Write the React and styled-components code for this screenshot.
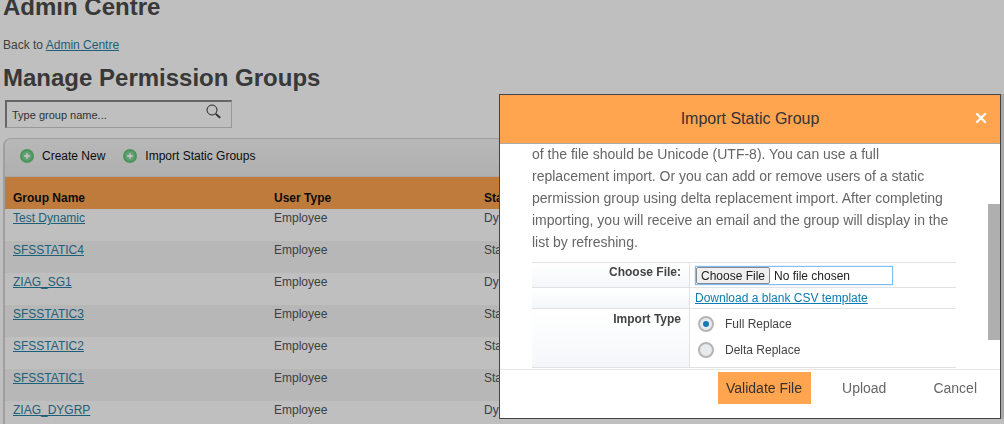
import React from "react";
import styled, { createGlobalStyle } from "styled-components";
import { X } from "lucide-react";

const GlobalStyle = createGlobalStyle`
  html, body {
    margin: 0;
    height: 100%;
    overflow: hidden;
    background: #fff;
    font-family: "Liberation Sans", Arial, sans-serif;
    color: #555;
  }
`;

const Page = styled.div`
  padding: 0 3px;
  width: 998px;
  height: 424px;
  overflow: hidden;
  box-sizing: border-box;
`;

const Title = styled.h1`
  margin: -5px 0 0;
  font-size: 24px;
  line-height: 24px;
  font-weight: 700;
  color: #4b4b4b;
`;

const BackLine = styled.div`
  margin-top: 18px;
  font-size: 12px;
  line-height: 16px;
`;

const TextLink = styled.a`
  color: #0b7ab3;
  text-decoration: underline;
`;

const PageLink = styled(TextLink)`
  color: #2a7fa5;
`;

const Heading = styled.h2`
  margin: 11px 0 0;
  font-size: 24px;
  line-height: 28px;
  font-weight: 700;
  color: #4b4b4b;
`;

const SearchBox = styled.div`
  margin: 8px 0 0 2px;
  width: 227px;
  height: 28px;
  box-sizing: border-box;
  display: flex;
  align-items: center;
  justify-content: space-between;
  padding: 0 10px 0 5px;
  border: 1px solid #ccc;
  border-top: 2px solid #888;
  border-left: 2px solid #888;
  font-size: 11px;
  color: #444;

  svg {
    margin-top: -6px;
  }
`;

const Panel = styled.div`
  margin-top: 10px;
  border-left: 2px solid #d4d4d4;
  border-top: 1px solid #d4d4d4;
  border-top-left-radius: 8px;
`;

const Toolbar = styled.div`
  height: 37px;
  box-sizing: border-box;
  display: flex;
  align-items: center;
  gap: 18px;
  padding: 0 0 3px 15px;
  background: linear-gradient(#f5f5f5, #ebebeb);
  border-top-left-radius: 8px;
`;

const ToolButton = styled.div`
  display: flex;
  align-items: center;
  gap: 8px;
  font-size: 12px;
  color: #111;
`;

const RowGrid = styled.div`
  display: grid;
  grid-template-columns: 261px 210px 1fr;
  padding-left: 8px;
  font-size: 12px;
`;

const HeaderRow = styled(RowGrid)`
  height: 33px;
  box-sizing: border-box;
  padding-top: 13px;
  line-height: 16px;
  font-weight: 700;
  color: #111;
  background: #ffa54f;
  border-top: 1px solid #ddd;
`;

const BodyRow = styled(RowGrid)`
  height: 32px;
  padding-top: 1px;
  box-sizing: border-box;
  line-height: 16px;
  background: ${(p) => (p.$alt ? "#f5f5f5" : "#fff")};
`;

const Backdrop = styled.div`
  position: fixed;
  inset: 0;
  background: rgba(0, 0, 0, 0.25);
`;

const Dialog = styled.div`
  position: fixed;
  left: 499px;
  top: 94px;
  width: 502px;
  height: 325px;
  box-sizing: border-box;
  display: flex;
  flex-direction: column;
  background: #fff;
  border: 1px solid #444;
  box-shadow: 4px 0 0 rgba(0, 0, 0, 0.12);
`;

const DialogHeader = styled.div`
  position: relative;
  flex: none;
  height: 49px;
  box-sizing: border-box;
  display: flex;
  align-items: center;
  justify-content: center;
  background: #ffa54f;
  border-bottom: 1px solid #aaa;
  font-size: 16px;
  color: #333;
`;

const CloseButton = styled.div`
  position: absolute;
  right: 11px;
  top: 15px;
  display: flex;
  color: #fff;
`;

const DialogBody = styled.div`
  position: relative;
  flex: 1;
  min-height: 0;
  padding: 0 44px 0 32px;
  overflow: hidden;
`;

const Thumb = styled.div`
  position: absolute;
  right: 0;
  top: 60px;
  width: 12px;
  height: 136px;
  background: #afafaf;
`;

const Intro = styled.p`
  margin: -1px 0 0;
  font-size: 14px;
  line-height: 22px;
  color: #666;
`;

const FormTable = styled.div`
  margin-top: 9px;
  border-top: 1px solid #e2e2e2;
`;

const FormRow = styled.div`
  display: grid;
  grid-template-columns: 158px 1fr;
  height: ${(p) => p.$h}px;
  box-sizing: border-box;
  border-bottom: 1px solid #e2e2e2;
`;

const FormLabel = styled.div`
  padding: ${(p) => p.$top || 2}px 8px 0 0;
  text-align: right;
  font-size: 12px;
  line-height: 16px;
  font-weight: 700;
  color: #444;
  background: linear-gradient(#fff, #f4f7f9);
  border-right: 1px solid #e2e2e2;
`;

const FormCell = styled.div`
  padding: ${(p) => p.$pad || "0 0 0 5px"};
  font-size: 12px;
`;

const FileBox = styled.div`
  margin-top: 3px;
  width: 198px;
  height: 19px;
  box-sizing: border-box;
  display: flex;
  align-items: stretch;
  border: 1px solid #80bdf5;
  box-shadow: 0 0 1px #80bdf5;
  font-size: 12px;
  color: #222;
`;

const FileButton = styled.div`
  width: 74px;
  box-sizing: border-box;
  display: flex;
  align-items: center;
  justify-content: center;
  background: #efefef;
  border: 1px solid #888;
  border-radius: 2px;
`;

const FileName = styled.div`
  display: flex;
  align-items: center;
  padding-left: 4px;
`;

const RadioRow = styled.div`
  height: 26px;
  display: flex;
  align-items: center;
  gap: 11px;
  padding-left: 8px;
  color: #444;
`;

const Radio = styled.span`
  width: 16px;
  height: 16px;
  box-sizing: border-box;
  display: flex;
  align-items: center;
  justify-content: center;
  border: 2px solid #b5b5b5;
  border-radius: 50%;
  background: #e6ebef;

  &::after {
    content: "";
    width: 6px;
    height: 6px;
    border-radius: 50%;
    background: ${(p) => (p.$checked ? "#1878b0" : "transparent")};
  }
`;

const DialogFooter = styled.div`
  flex: none;
  height: 49px;
  box-sizing: border-box;
  display: flex;
  justify-content: flex-end;
  align-items: flex-start;
  gap: 22px;
  padding: 2px 14px 0 0;
  border-top: 1px solid #e5e5e5;
`;

const FooterButton = styled.div`
  height: 32px;
  padding: 0 9px 0 ${(p) => (p.$primary ? 8 : 9)}px;
  display: flex;
  align-items: center;
  font-size: 14px;
  color: ${(p) => (p.$primary ? "#333" : "#666")};
  background: ${(p) => (p.$primary ? "#ffa54f" : "transparent")};

  &:last-child {
    margin-left: 7px;
  }
`;

const rows = [
  ["Test Dynamic", "Dynamic"],
  ["SFSSTATIC4", "Static"],
  ["ZIAG_SG1", "Dynamic"],
  ["SFSSTATIC3", "Static"],
  ["SFSSTATIC2", "Static"],
  ["SFSSTATIC1", "Static"],
  ["ZIAG_DYGRP", "Dynamic"],
];

function AddIcon() {
  return (
    <svg width="14" height="14" viewBox="0 0 14 14">
      <circle cx="7" cy="7" r="7" fill="#63c877" />
      <circle cx="7" cy="7" r="4.8" fill="#86d498" />
      <path d="M7 4.2v5.6M4.2 7h5.6" stroke="#fff" strokeWidth="1.8" />
    </svg>
  );
}

function SearchIcon() {
  return (
    <svg width="15" height="15" viewBox="0 0 15 15" fill="none" stroke="#333">
      <circle cx="6" cy="6" r="5" />
      <path d="M9.8 9.8 14.2 13.8" strokeWidth="1.8" />
    </svg>
  );
}

export default function App() {
  return (
    <>
      <GlobalStyle />
      <Page>
        <Title>Admin Centre</Title>
        <BackLine>
          Back to <PageLink>Admin Centre</PageLink>
        </BackLine>
        <Heading>Manage Permission Groups</Heading>
        <SearchBox>
          Type group name...
          <SearchIcon />
        </SearchBox>
        <Panel>
          <Toolbar>
            <ToolButton>
              <AddIcon />
              Create New
            </ToolButton>
            <ToolButton>
              <AddIcon />
              Import Static Groups
            </ToolButton>
          </Toolbar>
          <HeaderRow>
            <div>Group Name</div>
            <div>User Type</div>
            <div>Status</div>
          </HeaderRow>
          {rows.map(([name, status], i) => (
            <BodyRow key={name} $alt={i % 2 === 1}>
              <div>
                <PageLink>{name}</PageLink>
              </div>
              <div>Employee</div>
              <div>{status}</div>
            </BodyRow>
          ))}
        </Panel>
      </Page>
      <Backdrop />
      <Dialog>
        <DialogHeader>
          Import Static Group
          <CloseButton>
            <X size={16} strokeWidth={3.5} />
          </CloseButton>
        </DialogHeader>
        <DialogBody>
          <Intro>
            of the file should be Unicode (UTF-8). You can use a full
            <br />
            replacement import. Or you can add or remove users of a static
            <br />
            permission group using delta replacement import. After completing
            <br />
            importing, you will receive an email and the group will display in the
            <br />
            list by refreshing.
          </Intro>
          <FormTable>
            <FormRow $h={25}>
              <FormLabel $top={1}>Choose File:</FormLabel>
              <FormCell>
                <FileBox>
                  <FileButton>Choose File</FileButton>
                  <FileName>No file chosen</FileName>
                </FileBox>
              </FormCell>
            </FormRow>
            <FormRow $h={21}>
              <FormLabel />
              <FormCell $pad="3px 0 0 5px">
                <TextLink>Download a blank CSV template</TextLink>
              </FormCell>
            </FormRow>
            <FormRow $h={59}>
              <FormLabel>Import Type</FormLabel>
              <FormCell $pad="2px 0 0 0">
                <RadioRow>
                  <Radio $checked />
                  Full Replace
                </RadioRow>
                <RadioRow>
                  <Radio />
                  Delta Replace
                </RadioRow>
              </FormCell>
            </FormRow>
          </FormTable>
          <Thumb />
        </DialogBody>
        <DialogFooter>
          <FooterButton $primary>Validate File</FooterButton>
          <FooterButton>Upload</FooterButton>
          <FooterButton>Cancel</FooterButton>
        </DialogFooter>
      </Dialog>
    </>
  );
}
